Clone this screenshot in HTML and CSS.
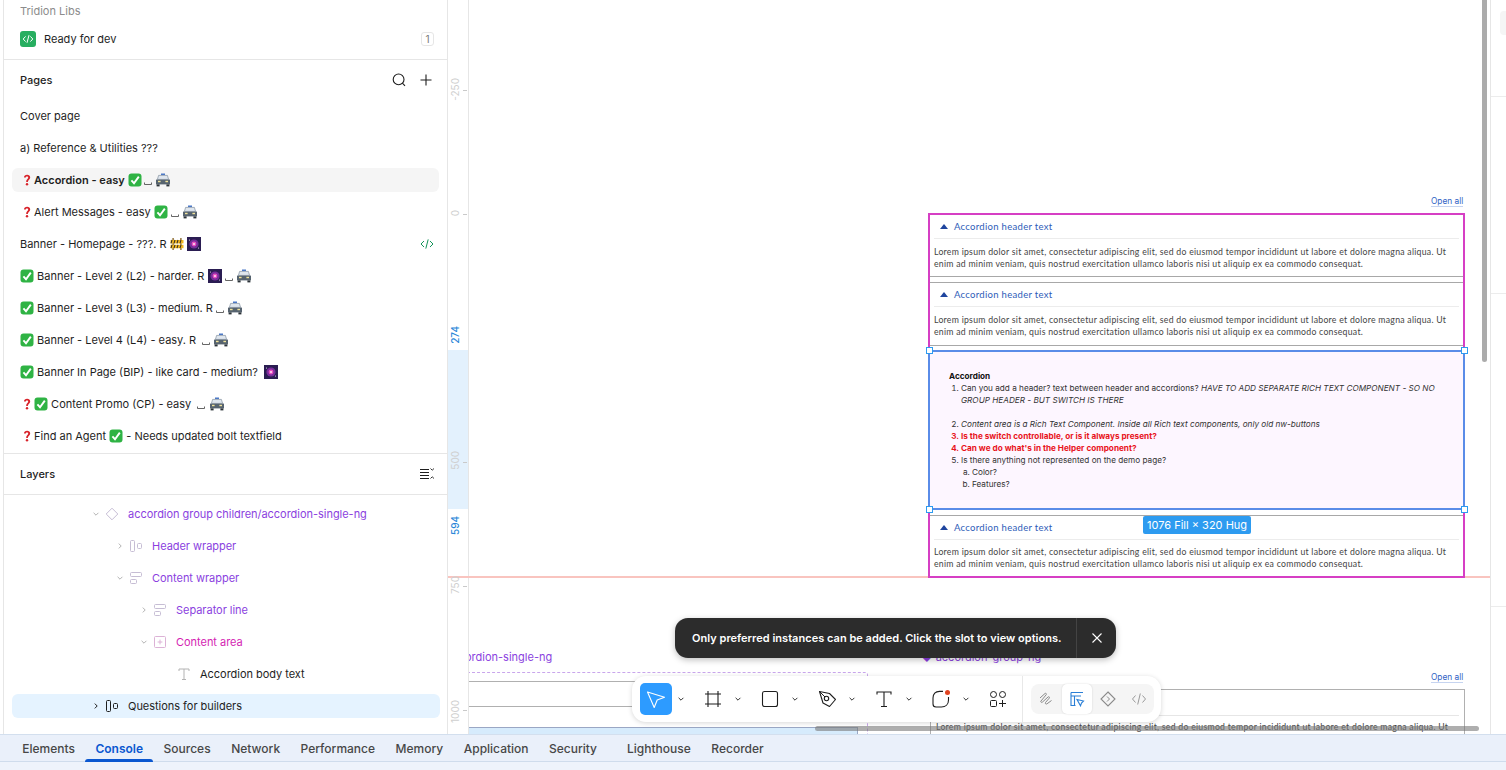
FILE: index.html
```html
<!DOCTYPE html>
<html lang="en">
<head>
    <meta charset="UTF-8">
    <meta name="viewport" content="width=device-width, initial-scale=1.0">
    <title>Accordion - Tridion Libs</title>
    <link rel="stylesheet" href="styles.css">
</head>
<body>
    <svg class="defs" width="0" height="0">
        <symbol id="check" viewBox="0 0 14 14">
            <rect x="0.5" y="0.5" width="13" height="13" rx="3" fill="#2fb344"/>
            <path d="M3.4 7.4 6 10.2 10.8 3.6" fill="none" stroke="#fff" stroke-width="1.9"/>
        </symbol>
        <symbol id="question" viewBox="0 0 14 14">
            <path d="M4 4.6C4 2.8 5.4 1.8 7.1 1.8 8.9 1.8 10.2 2.8 10.2 4.4 10.2 6.4 7.9 6.6 7.8 9H6.2C6.2 6.2 8.2 6 8.2 4.5 8.2 3.8 7.8 3.4 7 3.4 6.2 3.4 5.8 3.9 5.8 4.6Z" fill="#d8232a"/>
            <circle cx="7" cy="11.2" r="1.2" fill="#d8232a"/>
        </symbol>
        <symbol id="space" viewBox="0 0 8 14">
            <path d="M0.5 9.5V11.5H7.5V9.5" fill="none" stroke="#555" stroke-width="0.9"/>
        </symbol>
        <symbol id="car" viewBox="0 0 16 14">
            <rect x="6" y="0.5" width="4" height="1.6" fill="#4a78c8"/>
            <path d="M3.6 2.4H12.4L13.6 6.4H2.4Z" fill="#dfe6ee" stroke="#6f7f90" stroke-width="0.6"/>
            <path d="M1 6.6H15V11.4H1Z" fill="#56636f"/>
            <rect x="3" y="7.8" width="2.6" height="1.4" fill="#f2e39a"/>
            <rect x="10.4" y="7.8" width="2.6" height="1.4" fill="#f2e39a"/>
            <rect x="1.6" y="11.4" width="3" height="2" fill="#2b3238"/>
            <rect x="11.4" y="11.4" width="3" height="2" fill="#2b3238"/>
        </symbol>
        <symbol id="galaxy" viewBox="0 0 14 14">
            <rect width="14" height="14" fill="#2a1d52"/>
            <circle cx="7" cy="7" r="4.6" fill="#7a2c9c"/>
            <circle cx="7" cy="7" r="2.4" fill="#e84fc0"/>
            <circle cx="7" cy="7" r="1" fill="#ffe3f6"/>
            <circle cx="2.5" cy="3" r="0.5" fill="#fff"/>
            <circle cx="11.5" cy="11" r="0.5" fill="#fff"/>
        </symbol>
        <symbol id="barrier" viewBox="0 0 14 14">
            <rect x="2.4" y="1" width="1.4" height="12" fill="#8d6b2f"/>
            <rect x="10.2" y="1" width="1.4" height="12" fill="#8d6b2f"/>
            <rect x="0.5" y="3" width="13" height="3.4" fill="#f2b71f"/>
            <rect x="0.5" y="7.8" width="13" height="3.4" fill="#f2b71f"/>
            <path d="M2 3 1 6.4M5 3 4 6.4M8 3 7 6.4M11 3 10 6.4M2 7.8 1 11.2M5 7.8 4 11.2M8 7.8 7 11.2M11 7.8 10 11.2" stroke="#3a3226" stroke-width="1.1"/>
        </symbol>
        <symbol id="chev-down" viewBox="0 0 8 8">
            <path d="M1.6 2.8 4 5.2 6.4 2.8" fill="none" stroke="currentColor" stroke-width="1"/>
        </symbol>
        <symbol id="chev-right" viewBox="0 0 8 8">
            <path d="M2.8 1.6 5.2 4 2.8 6.4" fill="none" stroke="currentColor" stroke-width="1"/>
        </symbol>
        <symbol id="hlayout" viewBox="0 0 16 16">
            <rect x="2.5" y="2.5" width="4" height="11" rx="1" fill="none" stroke="currentColor"/>
            <rect x="9.5" y="5.5" width="4" height="5" rx="1" fill="none" stroke="currentColor"/>
        </symbol>
        <symbol id="vlayout" viewBox="0 0 16 16">
            <rect x="2.5" y="2.5" width="11" height="4" rx="1" fill="none" stroke="currentColor"/>
            <rect x="2.5" y="9.5" width="6" height="4" rx="1" fill="none" stroke="currentColor"/>
        </symbol>
    </svg>

    <div class="app">
        <aside class="sidebar">
            <div class="lib-head">
                <div class="lib-name">Tridion Libs</div>
                <div class="dev-row">
                    <span class="dev-badge">
                        <svg width="12" height="12" viewBox="0 0 12 12"><path d="M3.6 3.4 1.2 6l2.4 2.6M8.4 3.4 10.8 6 8.4 8.6M7 2.2 5 9.8" fill="none" stroke="#fff"/></svg>
                    </span>
                    <span class="dev-label">Ready for dev</span>
                    <span class="count">1</span>
                </div>
            </div>

            <section class="pages">
                <div class="section-head">
                    <h2>Pages</h2>
                    <svg class="head-icon" width="16" height="16" viewBox="0 0 16 16"><circle cx="7.6" cy="7.4" r="5.4" fill="none" stroke="#1e1e1e" stroke-width="1.1"/><path d="M11.4 11.2 14 13.8" stroke="#1e1e1e" stroke-width="1.1"/></svg>
                    <svg class="head-icon" width="16" height="16" viewBox="0 0 16 16"><path d="M8 2.5V13.5M2.5 8H13.5" stroke="#1e1e1e" stroke-width="1.1"/></svg>
                </div>
                <ul class="page-list">
                    <li class="page">Cover page</li>
                    <li class="page">a) Reference &amp; Utilities ???</li>
                    <li class="page selected"><svg class="emo"><use href="#question"/></svg>Accordion - easy <svg class="emo"><use href="#check"/></svg> <svg class="emo-sp"><use href="#space"/></svg> <svg class="emo-car"><use href="#car"/></svg></li>
                    <li class="page"><svg class="emo"><use href="#question"/></svg>Alert Messages - easy <svg class="emo"><use href="#check"/></svg> <svg class="emo-sp"><use href="#space"/></svg> <svg class="emo-car"><use href="#car"/></svg></li>
                    <li class="page">Banner - Homepage - ???. R <svg class="emo"><use href="#barrier"/></svg> <svg class="emo"><use href="#galaxy"/></svg>
                        <svg class="code-mark" width="14" height="12" viewBox="0 0 14 12"><path d="M4 3 1 6l3 3M10 3l3 3-3 3M8.2 1.4 5.8 10.6" fill="none" stroke="#14935a"/></svg>
                    </li>
                    <li class="page"><svg class="emo"><use href="#check"/></svg> Banner - Level 2 (L2) - harder. R <svg class="emo"><use href="#galaxy"/></svg> <svg class="emo-sp"><use href="#space"/></svg> <svg class="emo-car"><use href="#car"/></svg></li>
                    <li class="page"><svg class="emo"><use href="#check"/></svg> Banner - Level 3 (L3) - medium. R <svg class="emo-sp"><use href="#space"/></svg> <svg class="emo-car"><use href="#car"/></svg></li>
                    <li class="page"><svg class="emo"><use href="#check"/></svg> Banner - Level 4 (L4) - easy. R &nbsp;<svg class="emo-sp"><use href="#space"/></svg> <svg class="emo-car"><use href="#car"/></svg></li>
                    <li class="page"><svg class="emo"><use href="#check"/></svg> Banner In Page (BIP) - like card - medium? &nbsp;<svg class="emo"><use href="#galaxy"/></svg></li>
                    <li class="page"><svg class="emo"><use href="#question"/></svg><svg class="emo"><use href="#check"/></svg> Content Promo (CP) - easy &nbsp;<svg class="emo-sp"><use href="#space"/></svg> <svg class="emo-car"><use href="#car"/></svg></li>
                    <li class="page"><svg class="emo"><use href="#question"/></svg>Find an Agent <svg class="emo"><use href="#check"/></svg> - Needs updated bolt textfield</li>
                </ul>
            </section>

            <section class="layers">
                <div class="section-head">
                    <h2>Layers</h2>
                    <svg class="collapse-icon" width="16" height="16" viewBox="0 0 16 16"><path d="M1 3.5H10M1 6.5H10M1 9.5H10M1 12.5H10" stroke="#1e1e1e"/><path d="M11.5 2.5 13.2 4.2 15 2.5M11.5 12.5 13.2 10.8 15 12.5" fill="none" stroke="#1e1e1e" stroke-width="0.9"/></svg>
                </div>
                <ul class="layer-list">
                    <li class="layer depth-0 instance">
                        <svg class="chev"><use href="#chev-down"/></svg>
                        <svg class="lay-icon" viewBox="0 0 16 16"><path d="M8 2.2 13.8 8 8 13.8 2.2 8Z" fill="none" stroke="currentColor"/></svg>
                        accordion group children/accordion-single-ng
                    </li>
                    <li class="layer depth-1 instance">
                        <svg class="chev"><use href="#chev-right"/></svg>
                        <svg class="lay-icon"><use href="#hlayout"/></svg>
                        Header wrapper
                    </li>
                    <li class="layer depth-1 instance">
                        <svg class="chev"><use href="#chev-down"/></svg>
                        <svg class="lay-icon"><use href="#vlayout"/></svg>
                        Content wrapper
                    </li>
                    <li class="layer depth-2 instance">
                        <svg class="chev"><use href="#chev-right"/></svg>
                        <svg class="lay-icon"><use href="#vlayout"/></svg>
                        Separator line
                    </li>
                    <li class="layer depth-2 slot">
                        <svg class="chev"><use href="#chev-down"/></svg>
                        <svg class="lay-icon" viewBox="0 0 16 16"><rect x="2.5" y="2.5" width="11" height="11" rx="1" fill="none" stroke="currentColor"/><path d="M8 5.6V10.4M5.6 8H10.4" stroke="currentColor"/></svg>
                        Content area
                    </li>
                    <li class="layer depth-3 plain">
                        <span class="chev"></span>
                        <svg class="lay-icon" viewBox="0 0 16 16"><path d="M3 5V3H13V5M8 3V13.5M6 13.5H10" fill="none" stroke="currentColor"/></svg>
                        Accordion body text
                    </li>
                    <li class="layer depth-0 selected-layer">
                        <svg class="chev"><use href="#chev-right"/></svg>
                        <svg class="lay-icon"><use href="#hlayout"/></svg>
                        Questions for builders
                    </li>
                </ul>
            </section>
        </aside>

        <div class="ruler">
            <span class="ruler-band"></span>
            <span class="ruler-guide"></span>
            <span class="tick tick-a"></span><span class="tick tick-b"></span><span class="tick tick-c"></span><span class="tick tick-d"></span><span class="tick tick-e"></span>
            <span class="mark mark-a">-250</span>
            <span class="mark mark-b">0</span>
            <span class="mark mark-c">500</span>
            <span class="mark mark-d">750</span>
            <span class="mark mark-e">1000</span>
            <span class="mark blue mark-f">274</span>
            <span class="mark blue mark-g">594</span>
        </div>

        <main class="canvas">
            <div class="guide"></div>
            <a class="open-all open-a">Open all</a>
            <div class="group-frame">
                <div class="acc-item">
                    <div class="acc-head"><span class="caret"></span>Accordion header text</div>
                    <p class="acc-body">Lorem ipsum dolor sit amet, consectetur adipiscing elit, sed do eiusmod tempor incididunt ut labore et dolore magna aliqua. Ut enim ad minim veniam, quis nostrud exercitation ullamco laboris nisi ut aliquip ex ea commodo consequat.</p>
                </div>
                <div class="acc-item">
                    <div class="acc-head"><span class="caret"></span>Accordion header text</div>
                    <p class="acc-body">Lorem ipsum dolor sit amet, consectetur adipiscing elit, sed do eiusmod tempor incididunt ut labore et dolore magna aliqua. Ut enim ad minim veniam, quis nostrud exercitation ullamco laboris nisi ut aliquip ex ea commodo consequat.</p>
                </div>
                <div class="rich">
                    <strong class="rich-title">Accordion</strong>
                    <ol class="rich-list">
                        <li>Can you add a header? text between header and accordions? <em>HAVE TO ADD SEPARATE RICH TEXT COMPONENT - SO NO GROUP HEADER - BUT SWITCH IS THERE</em><br><br></li>
                        <li><em>Content area is a Rich Text Component. Inside all Rich text components, only old nw-buttons</em></li>
                        <li class="red">Is the switch controllable, or is it always present?</li>
                        <li class="red">Can we do what's in the Helper component?</li>
                        <li>Is there anything not represented on the demo page?
                            <ol class="rich-sub">
                                <li>Color?</li>
                                <li>Features?</li>
                            </ol>
                        </li>
                    </ol>
                </div>
                <div class="acc-item last">
                    <div class="acc-head"><span class="caret"></span>Accordion header text</div>
                    <p class="acc-body">Lorem ipsum dolor sit amet, consectetur adipiscing elit, sed do eiusmod tempor incididunt ut labore et dolore magna aliqua. Ut enim ad minim veniam, quis nostrud exercitation ullamco laboris nisi ut aliquip ex ea commodo consequat.</p>
                </div>
            </div>

            <span class="handle h-tl"></span><span class="handle h-tr"></span><span class="handle h-bl"></span><span class="handle h-br"></span>
            <span class="size-tag">1076 Fill × 320 Hug</span>

            <div class="frame-name name-left">ordion-single-ng</div>
            <div class="dashed-box"></div>
            <div class="left-line line-1"></div>
            <div class="left-line line-2"></div>
            <div class="left-blue"></div>

            <div class="frame-name name-right">◆ accordion-group-ng</div>
            <a class="open-all open-b">Open all</a>
            <div class="lower-frame">
                <div class="lower-sep"></div>
                <p class="acc-body">Lorem ipsum dolor sit amet, consectetur adipiscing elit, sed do eiusmod tempor incididunt ut labore et dolore magna aliqua. Ut</p>
            </div>

            <div class="scroll-v"></div>
            <div class="scroll-h"></div>

            <div class="toast">
                <span class="toast-text">Only preferred instances can be added. Click the slot to view options.</span>
                <span class="toast-close">
                    <svg width="12" height="12" viewBox="0 0 12 12"><path d="M1.5 1.5 10.5 10.5M10.5 1.5 1.5 10.5" stroke="#fff" stroke-width="1.1"/></svg>
                </span>
            </div>

            <div class="toolbar">
                <div class="tool">
                    <span class="tool-btn active">
                        <svg width="24" height="24" viewBox="0 0 24 24"><path d="M3.5 5 20.5 10.2 13.2 13 10.2 20.5Z" fill="none" stroke="#fff" stroke-width="1.1" stroke-linejoin="round"/></svg>
                    </span>
                    <svg class="tool-chev"><use href="#chev-down"/></svg>
                </div>
                <div class="tool">
                    <span class="tool-btn">
                        <svg width="20" height="20" viewBox="0 0 20 20"><path d="M5 2V18M15 2V18M2 5H18M2 15H18" stroke="#1e1e1e" stroke-width="1.1"/></svg>
                    </span>
                    <svg class="tool-chev"><use href="#chev-down"/></svg>
                </div>
                <div class="tool">
                    <span class="tool-btn">
                        <svg width="20" height="20" viewBox="0 0 20 20"><rect x="2.5" y="2.5" width="15" height="15" rx="2" fill="none" stroke="#1e1e1e" stroke-width="1.1"/></svg>
                    </span>
                    <svg class="tool-chev"><use href="#chev-down"/></svg>
                </div>
                <div class="tool">
                    <span class="tool-btn">
                        <svg width="20" height="20" viewBox="0 0 20 20"><path d="M2.500 2.500 12.500 4.500 18.500 10.500 12.500 17.500 6 14Z" fill="none" stroke="#1e1e1e" stroke-width="1.1" stroke-linejoin="round"/><circle cx="9.500" cy="9.500" r="2.200" fill="none" stroke="#1e1e1e" stroke-width="1.1"/><path d="M2.500 2.500 8 8" stroke="#1e1e1e"/></svg>
                    </span>
                    <svg class="tool-chev"><use href="#chev-down"/></svg>
                </div>
                <div class="tool">
                    <span class="tool-btn">
                        <svg width="20" height="20" viewBox="0 0 20 20"><path d="M3 5.500V3H17V5.500M10 3V17.500M7 17.500H13" fill="none" stroke="#1e1e1e" stroke-width="1.1"/></svg>
                    </span>
                    <svg class="tool-chev"><use href="#chev-down"/></svg>
                </div>
                <div class="tool">
                    <span class="tool-btn">
                        <svg width="22" height="22" viewBox="0 0 22 22"><path d="M13 3.400H9.500C5.400 3.400 3 6 3 10V16C3 17.800 4.200 19 6 19H11.500C15.500 19 18.500 16.500 18.500 12V9" fill="none" stroke="#1e1e1e" stroke-width="1.1"/><circle cx="17.500" cy="4.500" r="2.500" fill="#e0421f"/></svg>
                    </span>
                    <svg class="tool-chev"><use href="#chev-down"/></svg>
                </div>
                <div class="tool last-tool">
                    <span class="tool-btn">
                        <svg width="20" height="20" viewBox="0 0 20 20"><circle cx="5.500" cy="5.500" r="3" fill="none" stroke="#1e1e1e"/><circle cx="14.500" cy="5.500" r="3" fill="none" stroke="#1e1e1e"/><rect x="2.500" y="11.500" width="6" height="6" rx="1" fill="none" stroke="#1e1e1e"/><path d="M14.500 11V18M11 14.500H18" stroke="#1e1e1e"/></svg>
                    </span>
                </div>
                <div class="modes">
                    <span class="mode">
                        <svg width="16" height="16" viewBox="0 0 16 16"><path d="M2 7 7 2.500C8 1.800 9 3 8 4L3 10C2.200 11 3.500 12 4.500 11L10 6C11 5.200 12 6.200 11.200 7.200L7.500 11.500C6.800 12.500 8 13.500 9 12.800L13.500 9.500" fill="none" stroke="#8a8a8a"/></svg>
                    </span>
                    <span class="mode on">
                        <svg width="16" height="16" viewBox="0 0 16 16"><path d="M2 1.500H14M2 1.500V14.500H6.500M2 5H12M5.500 5V14" fill="none" stroke="#2a7fd6" stroke-width="1.100"/><path d="M8 8.500 14.500 10 12.500 12 11.500 14.800Z" fill="none" stroke="#2a7fd6" stroke-width="1.100"/></svg>
                    </span>
                    <span class="mode">
                        <svg width="16" height="16" viewBox="0 0 16 16"><path d="M8 1 15 8 8 15 1 8Z" fill="none" stroke="#8a8a8a" stroke-width="1.100"/><path d="M7 5.500 9.500 8 7 10.500" fill="none" stroke="#8a8a8a"/></svg>
                    </span>
                    <span class="mode">
                        <svg width="16" height="16" viewBox="0 0 16 16"><path d="M4.500 4.500 1.500 8l3 3.500M11.500 4.500l3 3.500-3 3.500M9.300 2.500 6.700 13.500" fill="none" stroke="#9a9a9a"/></svg>
                    </span>
                </div>
            </div>
        </main>

        <aside class="props">
            <div class="props-chip"></div>
        </aside>
    </div>

    <footer class="devtools">
        <nav class="dev-tabs">
            <a class="dev-tab">Elements</a>
            <a class="dev-tab on">Console</a>
            <a class="dev-tab">Sources</a>
            <a class="dev-tab">Network</a>
            <a class="dev-tab">Performance</a>
            <a class="dev-tab">Memory</a>
            <a class="dev-tab">Application</a>
            <a class="dev-tab">Security</a>
            <a class="dev-tab extra">Lighthouse</a>
            <a class="dev-tab">Recorder</a>
        </nav>
        <div class="dev-strip"></div>
    </footer>
</body>
</html>
```

FILE: styles.css
```css
* {
    box-sizing: border-box;
}
html, body {
    height: 100%;
    margin: 0;
    overflow: hidden;
}
body {
    font-family: Inter, "Noto Sans", sans-serif;
    font-size: 12px;
    color: #1e1e1e;
    background-color: #fff;
}
h2, p, ul, ol {
    margin: 0;
    padding: 0;
}
ul {
    list-style: none;
}
.defs {
    display: block;
    height: 0;
}

.app {
    display: flex;
    height: 734px;
    padding-left: 3px;
    background-color: #fff;
}

/* Left panel */
.sidebar {
    width: 445px;
    flex: none;
    overflow: hidden;
    border-left: 1px solid #e6e6e6;
    border-right: 1px solid #e6e6e6;
}
.lib-head {
    height: 60px;
    padding: 3px 8px 0 16px;
    border-bottom: 1px solid #e6e6e6;
}
.lib-name {
    height: 16px;
    line-height: 16px;
    font-size: 11px;
    color: #8c8c8c;
}
.dev-row {
    display: flex;
    align-items: center;
    height: 24px;
    margin-top: 8px;
}
.dev-badge {
    display: flex;
    align-items: center;
    justify-content: center;
    width: 16px;
    height: 16px;
    margin-right: 8px;
    border-radius: 3px;
    background-color: #27ae60;
}
.dev-label {
    flex: 1;
    font-size: 11px;
}
.count {
    width: 13px;
    height: 14px;
    margin-right: 5px;
    line-height: 13px;
    text-align: center;
    font-size: 10px;
    color: #777;
    border: 1px solid #e6e6e6;
    border-radius: 3px;
}
.section-head {
    display: flex;
    align-items: center;
    height: 40px;
    padding: 0 13px 0 16px;
}
.section-head h2 {
    flex: 1;
    font-size: 11px;
    font-weight: 500;
}
.head-icon {
    margin-left: 11px;
}
.pages {
    height: 394px;
    border-bottom: 1px solid #e6e6e6;
}
.page-list {
    padding-top: 4px;
}
.page {
    position: relative;
    height: 24px;
    margin: 0 8px 8px;
    padding-left: 8px;
    line-height: 24px;
    border-radius: 6px;
    font-size: 11px;
    white-space: nowrap;
}
.page.selected {
    background-color: #f5f5f5;
    font-weight: 600;
}
.page svg {
    vertical-align: -3px;
}
.emo {
    width: 14px;
    height: 14px;
}
.emo-sp {
    width: 8px;
    height: 14px;
}
.emo-car {
    width: 16px;
    height: 14px;
}
.page .code-mark {
    position: absolute;
    right: 5px;
    top: 6px;
}
.layers .section-head {
    height: 41px;
    padding-right: 12px;
    border-bottom: 1px solid #e6e6e6;
}
.layer-list {
    padding-top: 7px;
}
.layer {
    display: flex;
    align-items: center;
    height: 24px;
    margin: 0 7px 8px 8px;
    border-radius: 6px;
    font-size: 11px;
    letter-spacing: -0.03px;
    white-space: nowrap;
}
.depth-0 { padding-left: 80px; }
.depth-1 { padding-left: 104px; }
.depth-2 { padding-left: 128px; }
.depth-3 { padding-left: 152px; }
.chev {
    width: 8px;
    height: 8px;
    margin-right: 4px;
    color: #b3b3b3;
}
.lay-icon {
    width: 16px;
    height: 16px;
    margin-right: 8px;
    color: #c6bdd4;
}
.instance {
    color: #8b3fe0;
}
.slot {
    color: #d41fb3;
}
.slot .lay-icon {
    color: #dcb2d6;
}
.plain .lay-icon {
    color: #b3b3b3;
}
.selected-layer {
    background-color: #e5f3ff;
}
.selected-layer .chev,
.selected-layer .lay-icon {
    color: #1e1e1e;
}

/* Ruler on the canvas edge */
.ruler {
    position: relative;
    width: 21px;
    flex: none;
    border-right: 1px solid #e6e6e6;
}
.ruler-band {
    position: absolute;
    left: 0;
    right: 0;
    top: 350px;
    height: 159px;
    background-color: #e3f1fd;
}
.ruler-guide {
    position: absolute;
    left: 0;
    right: -1px;
    top: 576px;
    height: 2px;
    background-color: #f9c4bf;
}
.mark {
    position: absolute;
    left: 1px;
    width: 12px;
    writing-mode: vertical-rl;
    transform: rotate(180deg);
    font-size: 10px;
    line-height: 12px;
    color: #cfcfcf;
}
.mark.blue {
    color: #2a86d8;
    font-weight: 500;
}
.mark-a { top: 78px; }
.mark-b { top: 210px; }
.mark-c { top: 451px; }
.mark-d { top: 576px; }
.mark-e { top: 700px; }
.mark-f { top: 326px; }
.mark-g { top: 516px; }
.tick {
    position: absolute;
    left: 15px;
    width: 4px;
    height: 1px;
    background-color: #c9c9c9;
}
.tick-a { top: 90px; }
.tick-b { top: 214px; }
.tick-c { top: 462px; }
.tick-d { top: 586px; }
.tick-e { top: 710px; }

/* Canvas */
.canvas {
    position: relative;
    flex: 1;
    overflow: hidden;
    background-color: #fff;
}
.guide {
    position: absolute;
    left: 0;
    right: 0;
    top: 576px;
    height: 2px;
    background-color: #f9c4bf;
}
.open-all {
    position: absolute;
    font-size: 8.3px;
    color: #2f5fc4;
    border-bottom: 1px solid #c6d4f0;
    line-height: 10px;
}
.open-a {
    left: 962px;
    top: 196px;
}
.open-b {
    left: 962px;
    top: 672px;
}
.group-frame {
    position: absolute;
    left: 459px;
    top: 213px;
    width: 537px;
    height: 365px;
    border: 2px solid #d63fc4;
    display: flex;
    flex-direction: column;
    background-color: #fff;
}
.acc-item {
    height: 62px;
    margin-bottom: 5px;
    padding: 0 4px;
    border-bottom: 1px solid #a8a8a8;
}
.acc-item + .acc-item {
    border-top: 1px solid #a8a8a8;
}
.acc-item:nth-child(2) {
    height: 64px;
    margin-bottom: 4px;
}
.acc-item.last {
    height: 61px;
    margin: 5px 0 0;
    border-top: 1px solid #a8a8a8;
    border-bottom: 0;
}
.acc-item.last .acc-body {
    padding-top: 6px;
}
.acc-head {
    display: flex;
    align-items: center;
    height: 24px;
    padding-left: 6px;
    font-family: Lato, Inter, sans-serif;
    font-size: 9.5px;
    letter-spacing: 0.3px;
    color: #2e5cb8;
    border-bottom: 1px solid #ececec;
}
.caret {
    width: 0;
    height: 0;
    margin-right: 6px;
    border-left: 4px solid transparent;
    border-right: 4px solid transparent;
    border-bottom: 5px solid #1f459e;
}
.acc-body {
    max-width: 515px;
    padding-top: 7px;
    font-family: Lato, Inter, sans-serif;
    font-size: 8.7px;
    letter-spacing: 0.27px;
    line-height: 12px;
    color: #444;
}
.rich {
    height: 160px;
    margin: 0 -2px;
    padding: 18px 20px 0 19px;
    border: 2px solid #5a8ce8;
    background-color: #fdf6ff;
    font-size: 8.2px;
    line-height: 12px;
}
.rich-title {
    display: block;
    font-weight: 700;
    color: #111;
}
.rich-list {
    padding-left: 12px;
    list-style-position: outside;
}
.rich-list li {
    color: #333;
}
.rich-list .red {
    color: #e8141c;
    font-weight: 700;
}
.rich-sub {
    padding-left: 11px;
    list-style-type: lower-alpha;
}
.handle {
    position: absolute;
    width: 7px;
    height: 7px;
    background-color: #fff;
    border: 1px solid #2d9bf0;
}
.h-tl { left: 457px; top: 347px; }
.h-tr { left: 992px; top: 347px; }
.h-bl { left: 457px; top: 506px; }
.h-br { left: 992px; top: 506px; }
.size-tag {
    position: absolute;
    left: 674px;
    top: 516px;
    height: 18px;
    padding: 0 4px;
    line-height: 18px;
    font-size: 11px;
    color: #fff;
    background-color: #2d9bf0;
    border-radius: 2px;
}
.frame-name {
    position: absolute;
    top: 650px;
    font-size: 11px;
    line-height: 14px;
    color: #8b3fe0;
}
.name-left { left: -4px; }
.name-right { left: 452px; }
.dashed-box {
    position: absolute;
    left: -10px;
    top: 672px;
    width: 409px;
    height: 70px;
    border: 1px dashed #c9a6ec;
    border-radius: 3px;
}
.left-line {
    position: absolute;
    left: 0;
    width: 389px;
    height: 1px;
    background-color: #b0b0b0;
}
.line-1 { top: 681px; }
.line-2 { top: 706px; }
.left-blue {
    position: absolute;
    left: 0;
    top: 727px;
    width: 389px;
    height: 8px;
    background-color: #d6ebfc;
    border-top: 1px solid #9aa7c4;
    border-right: 1px solid #9aa7c4;
}
.lower-frame {
    position: absolute;
    left: 461px;
    top: 689px;
    width: 535px;
    height: 60px;
    padding: 0 5px;
    border: 1px solid #b0b0b0;
    background-color: #fff;
}
.lower-sep {
    height: 26px;
    border-bottom: 1px solid #e6e6e6;
}
.lower-frame .acc-body {
    max-width: none;
    padding-top: 5px;
    white-space: nowrap;
}
.scroll-v {
    position: absolute;
    right: 3px;
    top: 0;
    width: 5px;
    height: 362px;
    background-color: #ababab;
    border-radius: 0 0 3px 3px;
}
.scroll-h {
    position: absolute;
    left: 346px;
    top: 726px;
    width: 664px;
    height: 5px;
    background-color: rgba(120, 120, 120, 0.6);
    border-radius: 3px;
}

/* Floating toast and toolbar */
.toast {
    position: absolute;
    left: 206px;
    top: 618px;
    display: flex;
    align-items: center;
    width: 441px;
    height: 40px;
    padding-left: 17px;
    color: #fff;
    background-color: #2c2c2c;
    border-radius: 13px;
    box-shadow: 0 2px 6px rgba(0, 0, 0, 0.25);
}
.toast-text {
    flex: 1;
    font-size: 11px;
    font-weight: 600;
    letter-spacing: 0.02px;
    white-space: nowrap;
}
.toast-close {
    display: flex;
    align-items: center;
    justify-content: center;
    width: 40px;
    height: 40px;
    border-left: 1px solid #444;
}
.toolbar {
    position: absolute;
    left: 163px;
    top: 676px;
    display: flex;
    align-items: center;
    width: 529px;
    height: 46px;
    padding-left: 8px;
    background-color: #fff;
    border-radius: 14px;
    box-shadow: 0 1px 5px rgba(0, 0, 0, 0.16);
}
.tool {
    display: flex;
    align-items: center;
    width: 57px;
    flex: none;
}
.tool-btn {
    display: flex;
    align-items: center;
    justify-content: center;
    width: 32px;
    height: 32px;
    border-radius: 5px;
}
.tool-btn.active {
    background-color: #2d9bff;
}
.tool-chev {
    width: 8px;
    height: 8px;
    margin-left: 5px;
    color: #333;
}
.last-tool {
    width: 41px;
    height: 46px;
    border-right: 1px solid #e8e8e8;
}
.modes {
    display: flex;
    align-items: center;
    gap: 1px;
    height: 30px;
    margin-left: 8px;
    background-color: #f5f5f5;
    border-radius: 8px;
}
.mode {
    display: flex;
    align-items: center;
    justify-content: center;
    width: 30px;
    height: 30px;
    border-radius: 5px;
}
.mode.on {
    background-color: #fff;
    box-shadow: 0 0 2px rgba(0, 0, 0, 0.15);
}

/* Right panel, mostly cut off */
.props {
    position: relative;
    width: 16px;
    flex: none;
    border-left: 1px solid #e6e6e6;
    background:
        linear-gradient(#ececec, #ececec) 0 96px / 100% 1px no-repeat,
        linear-gradient(#ececec, #ececec) 0 293px / 100% 1px no-repeat,
        linear-gradient(#ececec, #ececec) 0 606px / 100% 1px no-repeat;
}
.props-chip {
    position: absolute;
    left: 9px;
    top: 11px;
    width: 10px;
    height: 24px;
    background-color: #f5f5f5;
    border-radius: 4px;
}

/* Browser devtools strip */
.devtools {
    height: 36px;
    background-color: #eaf0fa;
    border-top: 1px solid #d3dfee;
}
.dev-tabs {
    display: flex;
    height: 27px;
    padding-left: 12px;
    border-bottom: 1px solid #cfdcec;
}
.dev-tab {
    position: relative;
    padding: 0 10.25px;
    line-height: 28px;
    font-size: 12px;
    font-weight: 500;
    color: #474747;
}
.dev-tab.on {
    color: #0b57d0;
    font-weight: 600;
}
.dev-tab.on::after {
    content: "";
    position: absolute;
    left: 0;
    right: 0;
    bottom: -1px;
    height: 3px;
    background-color: #0b57d0;
    border-radius: 3px 3px 0 0;
}
.dev-tab.extra {
    margin-left: 9.5px;
}
.dev-strip {
    height: 8px;
    background-color: #eef3fb;
}
```
